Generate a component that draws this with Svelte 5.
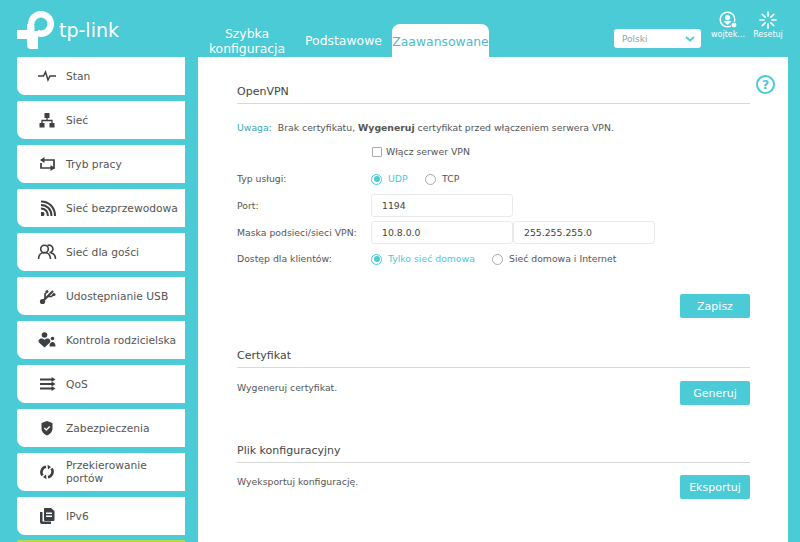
<script>
  const menu = [
    { label: 'Stan', icon: 'pulse' },
    { label: 'Sieć', icon: 'net' },
    { label: 'Tryb pracy', icon: 'mode' },
    { label: 'Sieć bezprzewodowa', icon: 'wifi' },
    { label: 'Sieć dla gości', icon: 'guest' },
    { label: 'Udostępnianie USB', icon: 'usb' },
    { label: 'Kontrola rodzicielska', icon: 'parent' },
    { label: 'QoS', icon: 'qos' },
    { label: 'Zabezpieczenia', icon: 'shield' },
    { label: 'Przekierowanie portów', icon: 'nat' },
    { label: 'IPv6', icon: 'ipv6' }
  ];
  const tabs = [
    { label: 'Szybka konfiguracja', cls: 'quick' },
    { label: 'Podstawowe', cls: 'basic' },
    { label: 'Zaawansowane', cls: 'adv' }
  ];
</script>

<div class="page">
  <header class="top">
    <div class="logo">
      <svg width="38" height="38" viewBox="0 0 38 38">
        <circle cx="24" cy="13" r="13" fill="#fff" />
        <path d="M10 13h11v25h-7a4 4 0 0 1-4-4z" fill="#fff" />
        <path d="M0 19h11v9H0z" fill="#fff" />
        <circle cx="24" cy="13" r="6.500" fill="#4acbd6" />
        <path d="M17.500 13H21v7h-3.500z" fill="#4acbd6" />
      </svg>
      <span>tp-link</span>
    </div>
    <nav class="tabs">
      {#each tabs as t}
        <div class="tab {t.cls}">{t.label}</div>
      {/each}
    </nav>
    <div class="lang">
      <span>Polski</span>
      <svg width="10" height="6" viewBox="0 0 10 6"><path d="M1 1l4 3.500L9 1" fill="none" stroke="#4acbd6" stroke-width="1.800" /></svg>
    </div>
    <div class="tool user">
      <svg width="19" height="18" viewBox="0 0 19 18">
        <circle cx="8.500" cy="8.500" r="7.300" fill="none" stroke="#fff" stroke-width="1.500" />
        <circle cx="8.500" cy="6.500" r="2.600" fill="#fff" />
        <path d="M4.500 10.500c1-1 7-1 8 0l-4 3.500z" fill="#fff" />
        <circle cx="15" cy="14" r="3" fill="#fff" stroke="#4acbd6" />
      </svg>
      <span>wojtek...</span>
    </div>
    <div class="tool reset">
      <svg width="18" height="18" viewBox="0 0 18 18" stroke="#fff" stroke-width="1.700" stroke-linecap="round">
        <path d="M9 1v4M9 13v4M1 9h4M13 9h4M3.300 3.300l2.800 2.800M11.900 11.900l2.800 2.800M14.700 3.300l-2.800 2.800M6.100 11.900l-2.800 2.800" />
      </svg>
      <span>Resetuj</span>
    </div>
  </header>

  <div class="body">
    <aside class="side">
      {#each menu as m}
        <div class="item">
          <span class="ico">
            <svg width="22" height="20" viewBox="0 0 22 20">
              {#if m.icon === 'pulse'}
                <path d="M2 10h5.500l2-4 2.500 8 2-4h6" fill="none" stroke="#3c4043" stroke-width="1.500" />
              {:else if m.icon === 'net'}
                <path d="M8.500 3h5v5h-5zM3.500 13h5v4.500h-5zM13.500 13h5v4.500h-5z" fill="#3c4043" />
                <path d="M6 13v-2.500h10V13M11 8v3" fill="none" stroke="#3c4043" stroke-width="1.300" />
              {:else if m.icon === 'mode'}
                <path d="M5 6h13v8h-2M17 14H5V9" fill="none" stroke="#3c4043" stroke-width="1.700" />
                <path d="M8.500 3v6L4 6zM14.500 11v6L19 14z" fill="#3c4043" />
              {:else if m.icon === 'wifi'}
                <path d="M5 14h2.500a2.500 2.500 0 0 1 0 4H5z" fill="#3c4043" />
                <path d="M5 10.500c4 0 7 3 7 7.500M5 7c6 0 10.500 4.500 10.500 11M5 3.500c8 0 14 6 14 14.500" fill="none" stroke="#3c4043" stroke-width="2" />
              {:else if m.icon === 'guest'}
                <circle cx="8.500" cy="7" r="3.800" fill="none" stroke="#3c4043" stroke-width="1.600" />
                <path d="M11.500 3.500a3.800 3.800 0 1 1 2 7.200M2.500 17c0-4 2.500-6.500 6-6.500s6 2.500 6 6.500M15 11c2.800.5 4.500 3 4.500 6" fill="none" stroke="#3c4043" stroke-width="1.600" />
              {:else if m.icon === 'usb'}
                <path d="M6 16L17 5" stroke="#3c4043" stroke-width="2.200" fill="none" />
                <circle cx="6.500" cy="15.500" r="2.600" fill="#3c4043" />
                <path d="M9 12.500V8l1.500-1.500M11.500 10.500h4L18 8" stroke="#3c4043" stroke-width="1.700" fill="none" />
                <circle cx="11" cy="5.500" r="1.500" fill="#3c4043" />
                <circle cx="18" cy="8.500" r="1.500" fill="#3c4043" />
              {:else if m.icon === 'parent'}
                <circle cx="8.500" cy="5" r="2.800" fill="#3c4043" />
                <circle cx="16.500" cy="8.500" r="1.800" fill="#3c4043" />
                <path d="M8.500 17.500L3.500 13c-2-2-.5-4.500 2-4.500 1.300 0 2.300.5 3 1.500.7-1 1.700-1.500 3-1.500 2.500 0 4 2.500 2 4.500z" fill="#3c4043" />
                <path d="M13.500 16.500c0-3 1.200-4.500 3-4.500s3 1.500 3 4.500z" fill="#3c4043" />
              {:else if m.icon === 'qos'}
                <path d="M4 5.500h13M4 10h14M4 14.500h13" stroke="#3c4043" stroke-width="1.800" fill="none" />
                <path d="M15.500 3l4 2.500-4 2.500zM15.500 7.500l4 2.500-4 2.500zM15.500 12l4 2.500-4 2.500z" fill="#3c4043" />
              {:else if m.icon === 'shield'}
                <path d="M11 3l5.500 2v5.500c0 3.500-2.500 5.500-5.500 7-3-1.500-5.500-3.500-5.500-7V5z" fill="#3c4043" />
                <path d="M8.300 10l2 2 3.400-3.500" fill="none" stroke="#fff" stroke-width="1.300" />
              {:else if m.icon === 'nat'}
                <path d="M6.500 13.500A5.500 5.500 0 0 1 10 4.800M15.500 6.500a5.500 5.500 0 0 1-3.500 8.700" fill="none" stroke="#3c4043" stroke-width="2.600" />
                <path d="M11.500 2.800l3.500 2.200-3 2.500zM10.500 17.200L7 15l3-2.500z" fill="#3c4043" />
              {:else}
                <path d="M4 6h2.500v9.500H15V18H6a2 2 0 0 1-2-2z" fill="#3c4043" />
                <path fill-rule="evenodd" d="M9 2h6l3.500 3v9a1 1 0 0 1-1 1H9a1 1 0 0 1-1-1V3a1 1 0 0 1 1-1zM10 6.500V8h6V6.500zM10 9.500V11h6V9.500z" fill="#3c4043" />
              {/if}
            </svg>
          </span>
          <span class="label">{m.label}</span>
        </div>
      {/each}
      <div class="item green"></div>
    </aside>

    <main class="panel">
      <div class="help">?</div>

      <h3 class="vpn">OpenVPN</h3>
      <p class="note"><span class="uwaga">Uwaga:</span> Brak certyfikatu, <b>Wygeneruj</b> certyfikat przed włączeniem serwera VPN.</p>

      <div class="row first">
        <span class="name"></span>
        <span class="check"></span><span class="opt">Włącz serwer VPN</span>
      </div>
      <div class="row service">
        <span class="name">Typ usługi:</span>
        <span class="radio on"></span><span class="opt on-text w-udp">UDP</span>
        <span class="radio"></span><span class="opt">TCP</span>
      </div>
      <div class="row field">
        <span class="name">Port:</span>
        <span class="input">1194</span>
      </div>
      <div class="row field">
        <span class="name">Maska podsieci/sieci VPN:</span>
        <span class="input">10.8.0.0</span>
        <span class="input">255.255.255.0</span>
      </div>
      <div class="row access">
        <span class="name">Dostęp dla klientów:</span>
        <span class="radio on"></span><span class="opt on-text w-home">Tylko sieć domowa</span>
        <span class="radio"></span><span class="opt">Sieć domowa i Internet</span>
      </div>

      <div class="actions"><button>Zapisz</button></div>

      <h3 class="cert">Certyfikat</h3>
      <div class="line"><span>Wygeneruj certyfikat.</span><button>Generuj</button></div>

      <h3 class="conf">Plik konfiguracyjny</h3>
      <div class="line"><span>Wyeksportuj konfigurację.</span><button>Eksportuj</button></div>
    </main>
  </div>
</div>

<style>
  :global(body) {
    margin: 0;
    background: #4acbd6;
    font-family: "DejaVu Sans", Verdana, sans-serif;
    overflow: hidden;
  }

  .page {
    width: 800px;
    height: 542px;
    overflow: hidden;
  }

  .top {
    height: 57px;
    display: flex;
    color: #fff;
  }

  .logo {
    margin: 11px 0 0 17px;
    width: 191px;
    height: 38px;
    display: flex;
    align-items: flex-start;
    flex: none;
  }

  .logo span {
    font-size: 19px;
    line-height: 20px;
    margin: 9px 0 0 4px;
  }

  .tabs {
    display: flex;
    align-items: flex-end;
    width: 406px;
    height: 57px;
    flex: none;
  }

  .tab {
    font-size: 12.400px;
    line-height: 15px;
    text-align: center;
    color: #fff;
    flex: none;
  }

  .quick {
    width: 78px;
    padding-bottom: 1px;
  }

  .basic {
    width: 87px;
    margin-left: 14px;
    padding-bottom: 9px;
  }

  .adv {
    width: 97px;
    height: 33px;
    margin-left: 5px;
    box-sizing: border-box;
    background: #fff;
    color: #4fbcc7;
    border-radius: 8px 8px 0 0;
    padding-top: 10px;
  }

  .lang {
    width: 87px;
    height: 19px;
    margin-top: 29px;
    flex: none;
    background: #fff;
    border-radius: 3px;
    font-size: 9px;
    color: #8fa3a8;
    display: flex;
    align-items: center;
    justify-content: space-between;
    padding: 0 6px 0 8px;
    box-sizing: border-box;
  }

  .tool {
    display: flex;
    flex-direction: column;
    align-items: center;
    font-size: 8px;
    line-height: 10px;
    width: 38px;
    margin-top: 11px;
    flex: none;
  }

  .tool span {
    margin-top: 1px;
    white-space: nowrap;
  }

  .user {
    margin-left: 8px;
  }

  .reset {
    margin-left: 2px;
  }

  .body {
    display: flex;
    align-items: flex-start;
  }

  .side {
    width: 168px;
    margin-left: 17px;
    display: flex;
    flex-direction: column;
    gap: 6px;
    flex: none;
  }

  .item {
    height: 38px;
    background: #fff;
    border-radius: 2px 0 0 8px;
    display: flex;
    align-items: center;
    color: #555;
    font-size: 10.700px;
    line-height: 13px;
    flex: none;
  }

  .item.green {
    background: #b7d84a;
    margin-top: -1px;
  }

  .ico {
    width: 49px;
    padding-left: 19px;
    box-sizing: border-box;
    display: flex;
    flex: none;
  }

  .label {
    width: 118px;
    flex: none;
  }

  .panel {
    position: relative;
    margin-left: 13px;
    width: 590px;
    height: 485px;
    flex: none;
    background: #fff;
    padding: 0 38px 0 39px;
    box-sizing: border-box;
    color: #555;
    font-size: 9.300px;
    line-height: 12px;
  }

  .help {
    position: absolute;
    right: 13px;
    top: 18px;
    width: 15px;
    height: 15px;
    border: 2px solid #4acbd6;
    border-radius: 50%;
    color: #4acbd6;
    font-size: 13px;
    font-weight: bold;
    line-height: 15px;
    text-align: center;
  }

  h3 {
    margin: 0;
    font-size: 11px;
    font-weight: normal;
    line-height: 14px;
    padding-bottom: 4px;
    border-bottom: 1px solid #d9d9d9;
    color: #444;
  }

  .vpn {
    margin-top: 28px;
  }

  .note {
    margin: 18px 0 0;
  }

  .uwaga {
    color: #3aa9b5;
    margin-right: 3px;
  }

  .row {
    display: flex;
    align-items: center;
  }

  .name {
    width: 134px;
    flex: none;
  }

  .first {
    margin-top: 10px;
    height: 16px;
  }

  .service {
    margin-top: 11px;
    height: 16px;
  }

  .field {
    margin-top: 4px;
    height: 23px;
  }

  .service + .field {
    margin-top: 7px;
  }

  .access {
    margin-top: 7px;
    height: 16px;
  }

  .check {
    width: 8px;
    height: 8px;
    border: 1px solid #aaa;
    border-radius: 1px;
    margin: 0 4px 0 1px;
  }

  .radio {
    width: 9px;
    height: 9px;
    border: 1px solid #aaa;
    border-radius: 50%;
    margin-right: 6px;
    flex: none;
    position: relative;
  }

  .radio.on {
    border-color: #4acbd6;
  }

  .radio.on::after {
    content: '';
    position: absolute;
    inset: 1.500px;
    border-radius: 50%;
    background: #4acbd6;
  }

  .on-text {
    color: #4acbd6;
  }

  .w-udp {
    width: 37px;
  }

  .w-home {
    width: 104px;
  }

  .input {
    width: 142px;
    height: 23px;
    box-sizing: border-box;
    border: 1px solid #eaeaea;
    border-radius: 3px;
    padding-left: 10px;
    line-height: 21px;
    color: #444;
    flex: none;
  }

  .actions {
    display: flex;
    justify-content: flex-end;
    margin-top: 27px;
  }

  button {
    width: 70px;
    height: 24px;
    background: #4acbd6;
    color: #fff;
    border: 0;
    border-radius: 2px;
    padding: 0;
    font: 11px "DejaVu Sans", Verdana, sans-serif;
  }

  .cert {
    margin-top: 31px;
  }

  .line {
    display: flex;
    justify-content: space-between;
    align-items: flex-start;
    margin-top: 13px;
    height: 63px;
  }

  .conf + .line {
    margin-top: 12px;
  }

  .line span {
    margin-top: 1px;
  }
</style>
